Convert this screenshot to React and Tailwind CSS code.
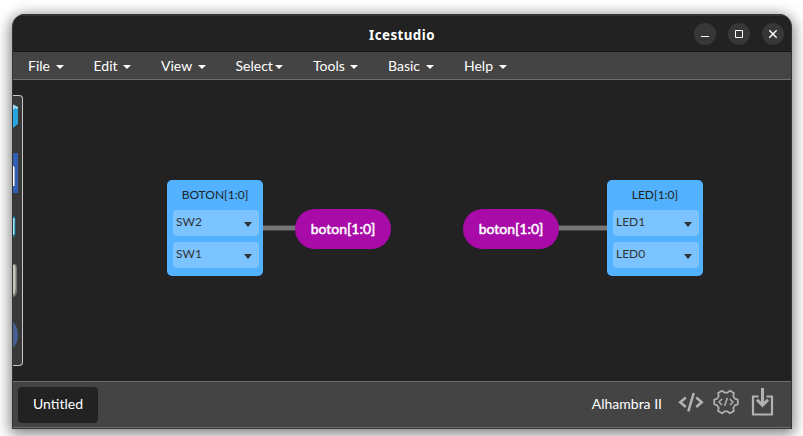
const menus = [
  { label: 'File', width: 'w-[65.5px]', gap: 'ml-[6px]' },
  { label: 'Edit', width: 'w-[67.5px]', gap: 'ml-[5px]' },
  { label: 'View', width: 'w-[74.5px]', gap: 'ml-[6px]' },
  { label: 'Select', width: 'w-[77.5px]', gap: 'ml-[2px]' },
  { label: 'Tools', width: 'w-[75px]', gap: 'ml-[5px]' },
  { label: 'Basic', width: 'w-[76px]', gap: 'ml-[6px]' },
  { label: 'Help', width: 'w-[70px]', gap: 'ml-[6px]' },
];

function WindowButton({ children }) {
  return (
    <div className="flex size-[22px] items-center justify-center rounded-full bg-[#373737]">
      <svg width="22" height="22" viewBox="0 0 22 22" fill="none" stroke="#fff">
        {children}
      </svg>
    </div>
  );
}

function TitleBar() {
  return (
    <header className="grid h-[38px] shrink-0 grid-cols-[1fr_auto_1fr] items-center border-t-2 border-b border-t-[#343434] border-b-[#181818] pr-[7px]">
      <div />
      <h1 className="pt-[2px] pl-[7px] font-['Noto_Sans',sans-serif] text-[13.3px] leading-5 font-bold tracking-[0.45px] text-white">Icestudio</h1>
      <div className="flex justify-end gap-3">
        <WindowButton>
          <path d="M7 13.5h8" />
        </WindowButton>
        <WindowButton>
          <path d="M7.5 7.5h7v7h-7z" />
        </WindowButton>
        <WindowButton>
          <path d="M7.3 7.3l7.4 7.4M14.7 7.3l-7.4 7.4" strokeWidth="1.4" />
        </WindowButton>
      </div>
    </header>
  );
}

function MenuBar() {
  return (
    <nav className="flex h-7 shrink-0 items-center border-b border-[#6e6e6e] bg-[#444] pl-[15px] text-[14px] leading-5 text-white">
      {menus.map((m) => (
        <div key={m.label} className={`flex shrink-0 items-center ${m.width}`}>
          <span>{m.label}</span>
          <span className={`mt-[2px] border-x-4 border-t-4 border-x-transparent border-t-white ${m.gap}`} />
        </div>
      ))}
    </nav>
  );
}

function Palette() {
  return (
    <aside className="mt-[15px] h-[271px] w-[10px] overflow-hidden rounded-r-[4px] border-y border-r border-[#c8c8c8] bg-[#393939]">
      <svg width="9" height="269" viewBox="0 0 9 269">
        <path d="M0 8.500L5 11V28L0 32z" fill="#27a5dc" />
        <path d="M0 8.500L5 11V13L2 12L0 14z" fill="#a5dcf0" />
        <path d="M0 57h5v40H0z" fill="#325fb3" />
        <path d="M0 70h1v20H0z" fill="#fff" />
        <path d="M1 71h1v19H1z" fill="#a4b2d0" />
        <path d="M0 120h1.500l1 2v16l-1 3H0z" fill="#1a6f8c" />
        <path d="M0 122h1v17H0z" fill="#a4e4f2" />
        <path d="M1 122h1v16H1z" fill="#55b2cc" />
        <path d="M0 168h2q2 0 2 5v22q0 5-4 6z" fill="#777773" />
        <path d="M0 169h1.500q1 0 1 4v20q0 4-2.500 6z" fill="#c5c5bd" />
        <path d="M0 226q5 5 5 13t-5 13z" fill="#47608f" />
      </svg>
    </aside>
  );
}

function IoBlock({ title, pins, position }) {
  return (
    <section className={`absolute top-[100px] flex size-24 flex-col gap-[6px] rounded-[5px] bg-[#52b2ff] pr-1 pl-[6px] text-[12px] text-[#333] ${position}`}>
      <h2 className="-mb-[6px] h-[30px] pr-[2px] pt-[7px] text-center leading-4 text-[#222]">{title}</h2>
      {pins.map((pin) => (
        <div key={pin} className="flex h-[26px] justify-between rounded-[4px] bg-[#7bc4ff] pr-[7px] pl-[3px]">
          <span className="pt-1 leading-4">{pin}</span>
          <span className="mt-3 h-0 border-x-4 border-t-5 border-x-transparent border-t-[#333]" />
        </div>
      ))}
    </section>
  );
}

function NetLabel({ text, position }) {
  return (
    <div className={`absolute top-[129px] flex h-10 w-24 items-center justify-center rounded-full bg-[#a80ba8] pb-[2px] text-[14px] text-white [-webkit-text-stroke:0.5px_#fff] ${position}`}>
      {text}
    </div>
  );
}

function Wire({ position }) {
  return <div className={`absolute top-[145px] h-[6px] border-y border-[#444] bg-[#777] ${position}`} />;
}

function StatusBar() {
  return (
    <footer className="flex h-[47px] shrink-0 items-center border-y border-[#6e6e6e] bg-[#444] pl-[5px] pr-[17px] text-[14px] text-white">
      <div className="flex h-9 w-20 items-center justify-center rounded-[4px] bg-[#222] pb-[2px]">Untitled</div>
      <div className="ml-auto pb-[2px]">Alhambra II</div>
      <svg className="ml-4 mb-1.5" width="26" height="24" viewBox="0 0 26 24" fill="none" stroke="#b2b2b2" strokeWidth="2.600">
        <path d="M7.800 7.500L2.300 12.300L7.800 17M18.200 7.500L23.700 12.300L18.200 17M15.700 3L10.300 21.500" />
      </svg>
      <svg className="ml-[9px] mb-1.5" width="26" height="26" viewBox="0 0 26 26" fill="none" stroke="#b2b2b2" strokeWidth="1.700" strokeLinejoin="round">
        <path d="M24.800 15.300V10.700L21.800 9.600L20.300 7.100L20.900 3.900L16.900 1.700L14.500 3.700H11.500L9.100 1.700L5.100 3.900L5.700 7.100L4.200 9.600L1.200 10.700V15.300L4.200 16.400L5.700 18.900L5.100 22.100L9.100 24.300L11.500 22.300H14.500L16.900 24.300L20.900 22.100L20.300 18.900L21.800 16.400z" />
        <path d="M9 10L6 13L9 16M17 10L20 13L17 16M14.400 9L11.600 17" strokeWidth="1.500" />
      </svg>
      <svg className="ml-[12px] mb-[5px]" width="23" height="30" viewBox="0 0 23 30" fill="none" stroke="#b2b2b2" strokeWidth="2.200">
        <path d="M7.500 9.500H2v18h19V9.500h-5.500" />
        <path d="M11.500 1v17M6 12.800l5.500 5.500 5.500-5.500" strokeWidth="3" />
      </svg>
    </footer>
  );
}

export default function App() {
  return (
    <div className="h-[436px] w-[803px] overflow-hidden bg-white pt-[14px] pl-[12px] font-[Lato,sans-serif]">
      <main className="flex h-[415px] w-[780px] flex-col overflow-hidden rounded-t-[13px] border-x border-b border-[#343434] bg-[#222] shadow-[0_3px_14px_2px_rgba(0,0,0,0.5)]">
        <TitleBar />
        <MenuBar />
        <div className="relative h-[301px] shrink-0">
          <Palette />
          <Wire position="left-[250px] w-[40px]" />
          <Wire position="left-[540px] w-[54px]" />
          <IoBlock title="BOTON[1:0]" pins={['SW2', 'SW1']} position="left-[154px]" />
          <NetLabel text="boton[1:0]" position="left-[282px]" />
          <NetLabel text="boton[1:0]" position="left-[450px]" />
          <IoBlock title="LED[1:0]" pins={['LED1', 'LED0']} position="left-[594px]" />
        </div>
        <StatusBar />
      </main>
    </div>
  );
}
